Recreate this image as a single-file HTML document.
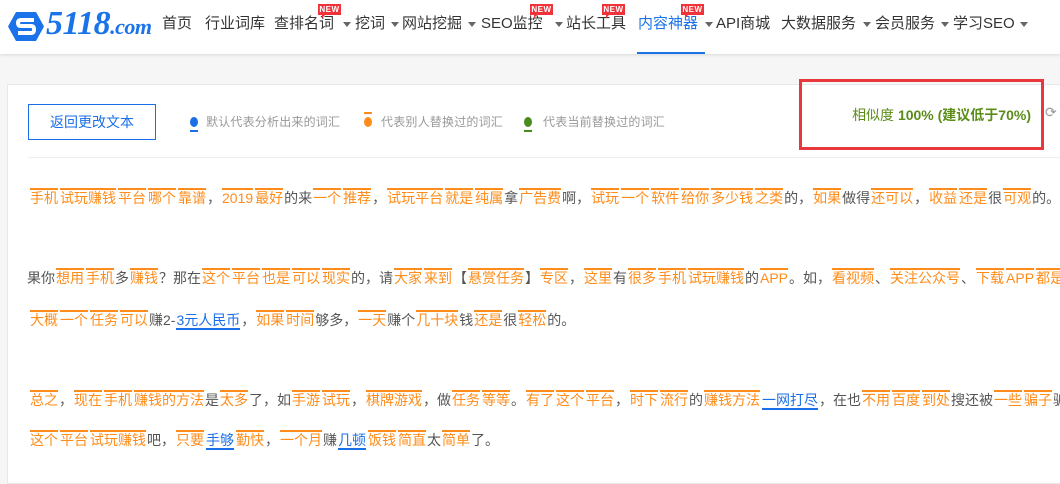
<!DOCTYPE html>
<html><head><meta charset="utf-8">
<style>
*{margin:0;padding:0;box-sizing:border-box}
body{width:1060px;height:459px;overflow:hidden;background:#f6f6f6;font-family:"Liberation Sans","Noto Sans CJK SC",sans-serif;position:relative}
.hdr{position:absolute;left:0;top:0;width:1060px;height:54px;background:#fff;box-shadow:0 1px 3px rgba(0,0,0,.12)}
.n{position:absolute;top:14px;font-size:15px;color:#333;white-space:nowrap;line-height:20px}
.ar{position:absolute;top:22px;width:0;height:0;border-left:4px solid transparent;border-right:4px solid transparent;border-top:5px solid #666}
.new{position:absolute;top:4px;width:23px;height:11px;background:#f0323a;color:#fff;font-size:8px;font-weight:bold;line-height:11px;text-align:center;letter-spacing:.5px}
.new:after{content:"";position:absolute;left:4px;bottom:-3px;border-left:3px solid #f0323a;border-bottom:3px solid transparent}
.card{position:absolute;left:7px;top:84px;width:1060px;height:400px;background:#fff;border:1px solid #e8e8e8}
.btn{position:absolute;left:28px;top:104px;width:128px;height:36px;border:1px solid #1a6fe8;color:#1a6fe8;font-size:14px;text-align:center;line-height:34px;background:#fff}
.lg{position:absolute;top:114px;font-size:12px;letter-spacing:.2px;color:#999;line-height:16px;white-space:nowrap}
.dot{position:absolute;width:8px;height:10px;border-radius:50%}
.bar{position:absolute;width:8px;height:2px}
.red{position:absolute;left:799px;top:79px;width:245px;height:71px;border:3px solid #e8383d}
.sim{position:absolute;right:29px;top:105px;font-size:14px;color:#5c8c18;white-space:nowrap}
.ln{position:absolute;left:29px;font-size:14px;line-height:20px;color:#555;white-space:nowrap}
.o{color:#ff8c1a;border-top:2px solid #ff8c1a;margin:0 1px}
.b{color:#1a6fe8;border-bottom:2px solid #1a6fe8;margin:0 1px}
</style></head><body>
<div class="hdr">
<svg style="position:absolute;left:8px;top:12px" width="36" height="29" viewBox="0 0 36 29"><polygon points="8,0 28,0 36,14.5 28,29 8,29 0,14.5" fill="#1a73e8"/><path d="M26 8 H13 Q10 8 10 11 Q10 14 13 14 H23 Q26 14 26 17.5 Q26 21 23 21 H10" stroke="#fff" stroke-width="4" fill="none"/></svg>
<div style="position:absolute;left:46px;top:5px;font-family:'Liberation Serif',serif;font-style:italic;font-weight:bold;color:#1a73e8;font-size:34px;line-height:38px;letter-spacing:-0.5px">5118<span style="font-size:22px">.com</span></div>
<div class="n" style="left:162px">首页</div>
<div class="n" style="left:205px">行业词库</div>
<div class="n" style="left:274px">查排名词</div><div class="ar" style="left:343px"></div><div class="new" style="left:318px">NEW</div>
<div class="n" style="left:355px">挖词</div><div class="ar" style="left:391px"></div>
<div class="n" style="left:402px">网站挖掘</div><div class="ar" style="left:468px"></div>
<div class="n" style="left:481px">SEO监控</div><div class="ar" style="left:555px"></div><div class="new" style="left:530px">NEW</div>
<div class="n" style="left:566px">站长工具</div><div class="new" style="left:602px">NEW</div>
<div class="n" style="left:638px;color:#1a73e8">内容神器</div><div class="ar" style="left:705px"></div><div class="new" style="left:681px">NEW</div>
<div style="position:absolute;left:637px;top:52px;width:68px;height:2px;background:#1a73e8"></div>
<div class="n" style="left:716px">API商城</div>
<div class="n" style="left:781px">大数据服务</div><div class="ar" style="left:863px"></div>
<div class="n" style="left:875px">会员服务</div><div class="ar" style="left:941px"></div>
<div class="n" style="left:953px">学习SEO</div><div class="ar" style="left:1020px"></div>
</div>
<div class="card"></div>
<div class="btn">返回更改文本</div>
<div class="dot" style="left:190px;top:117px;background:#1a6fe8"></div><div class="bar" style="left:190px;top:130px;background:#1a6fe8"></div>
<div class="lg" style="left:206px">默认代表分析出来的词汇</div>
<div class="bar" style="left:364px;top:112px;background:#ff8c1a"></div><div class="dot" style="left:364px;top:117px;background:#ff8c1a"></div>
<div class="lg" style="left:381px">代表别人替换过的词汇</div>
<div class="dot" style="left:524px;top:117px;background:#4a8c1c"></div><div class="bar" style="left:524px;top:130px;background:#4a8c1c"></div>
<div class="lg" style="left:543px">代表当前替换过的词汇</div>
<div style="position:absolute;left:28px;top:157px;width:1040px;height:1px;background:#eee"></div>
<div class="red"></div>
<div class="sim">相似度 <b>100% (建议低于70%)</b></div>
<div style="position:absolute;left:1045px;top:104px;color:#999;font-size:14px">⟳</div>

<div class="ln" style="top:188px"><span class="o">手机</span><span class="o">试玩赚钱</span><span class="o">平台</span><span class="o">哪个</span><span class="o">靠谱</span>，<span class="o">2019</span><span class="o">最好</span>的来<span class="o">一个</span><span class="o">推荐</span>，<span class="o">试玩平台</span><span class="o">就是</span><span class="o">纯属</span>拿<span class="o">广告费</span>啊，<span class="o">试玩</span><span class="o">一个</span><span class="o">软件</span><span class="o">给你</span><span class="o">多少钱</span><span class="o">之类</span>的，<span class="o">如果</span>做得<span class="o">还可以</span>，<span class="o">收益</span><span class="o">还是</span>很<span class="o">可观</span>的。</div>
<div class="ln" style="top:268px;left:27px">果你<span class="o">想用</span><span class="o">手机</span>多<span class="o">赚钱</span>？那在<span class="o">这个</span><span class="o">平台</span><span class="o">也是</span><span class="o">可以</span><span class="o">现实</span>的，请<span class="o">大家</span><span class="o">来到</span>【<span class="o">悬赏任务</span>】<span class="o">专区</span>，<span class="o">这里</span>有<span class="o">很多</span><span class="o">手机</span><span class="o">试玩赚钱</span>的<span class="o">APP</span>。如，<span class="o">看视频</span>、<span class="o">关注公众号</span>、<span class="o">下载</span><span class="o">APP</span><span class="o">都是</span></div>
<div class="ln" style="top:310px"><span class="o">大概</span><span class="o">一个</span><span class="o">任务</span><span class="o">可以</span>赚2-<span class="b">3元人民币</span>，<span class="o">如果</span><span class="o">时间</span>够多，<span class="o">一天</span>赚个<span class="o">几十块</span>钱<span class="o">还是</span>很<span class="o">轻松</span>的。</div>
<div class="ln" style="top:390px"><span class="o">总之</span>，<span class="o">现在</span><span class="o">手机</span><span class="o">赚钱的方法</span>是<span class="o">太多</span>了，如<span class="o">手游</span><span class="o">试玩</span>，<span class="o">棋牌游戏</span>，做<span class="o">任务</span><span class="o">等等</span>。<span class="o">有了</span><span class="o">这个</span><span class="o">平台</span>，<span class="o">时下</span><span class="o">流行</span>的<span class="o">赚钱方法</span><span class="b">一网打尽</span>，在也<span class="o">不用</span><span class="o">百度</span><span class="o">到处</span>搜还被<span class="o">一些</span><span class="o">骗子</span>骗</div>
<div class="ln" style="top:430px"><span class="o">这个</span><span class="o">平台</span><span class="o">试玩赚钱</span>吧，<span class="o">只要</span><span class="b">手够</span><span class="o">勤快</span>，<span class="o">一个月</span>赚<span class="b">几顿</span><span class="o">饭钱</span><span class="o">简直</span>太<span class="o">简单</span>了。</div>
</body></html>
